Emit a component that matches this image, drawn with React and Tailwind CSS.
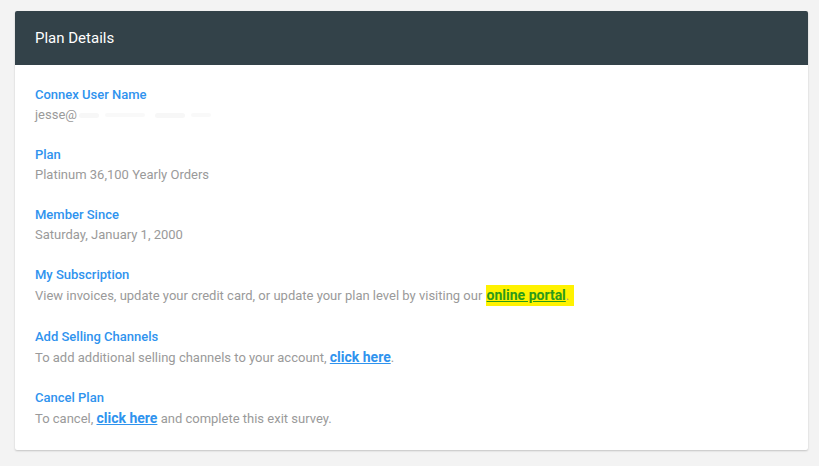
export default function App() {
  const font = { fontFamily: "Roboto, 'Noto Sans', sans-serif" };
  return (
    <div className="min-h-[466px] w-full bg-[#f3f3f3] pt-[11px] pl-[15px]" style={font}>
      <div className="w-[793px] h-[439px] bg-white rounded-[2px] shadow-[0_1px_2px_rgba(0,0,0,0.2)] overflow-hidden">
        <div className="h-[54px] bg-[#334249] flex items-center px-5">
          <h1 className="text-white text-[15px]">Plan Details</h1>
        </div>
        <div className="px-5 pt-[20px] flex flex-col gap-[20px] text-[13px] leading-[20px]">
          <div>
            <div className="text-[#2f93ee] font-medium">Connex User Name</div>
            <div className="text-[#9a9a9a] flex items-center">
              <span>jesse@</span>
              <span className="inline-block w-[20px] h-[5px] bg-[#f7f7f7] rounded-full ml-[2px]"></span>
              <span className="inline-block w-[40px] h-[4px] bg-[#f9f9f9] rounded-full ml-[6px]"></span>
              <span className="inline-block w-[30px] h-[5px] bg-[#f7f7f7] rounded-full ml-[10px]"></span>
              <span className="inline-block w-[20px] h-[4px] bg-[#f9f9f9] rounded-full ml-[6px]"></span>
            </div>
          </div>
          <div>
            <div className="text-[#2f93ee] font-medium">Plan</div>
            <div className="text-[#9a9a9a]">Platinum 36,100 Yearly Orders</div>
          </div>
          <div>
            <div className="text-[#2f93ee] font-medium">Member Since</div>
            <div className="text-[#9a9a9a]">Saturday, January 1, 2000</div>
          </div>
          <div className="pb-[1px]">
            <div className="text-[#2f93ee] font-medium">My Subscription</div>
            <div className="text-[#9a9a9a]">
              View invoices, update your credit card, or update your plan level by visiting our{" "}
              <span className="bg-[#fff200] pr-[5px] pl-[1px] py-[3px]">
                <a href="#" className="text-[#2c9a1a] font-bold underline text-[14px]">online portal</a>
                <span className="text-[#9a9a9a]">.</span>
              </span>
            </div>
          </div>
          <div>
            <div className="text-[#2f93ee] font-medium">Add Selling Channels</div>
            <div className="text-[#9a9a9a]">
              To add additional selling channels to your account,{" "}
              <a href="#" className="text-[#2f93ee] font-bold underline text-[14px]">click here</a>.
            </div>
          </div>
          <div>
            <div className="text-[#2f93ee] font-medium">Cancel Plan</div>
            <div className="text-[#9a9a9a]">
              To cancel,{" "}
              <a href="#" className="text-[#2f93ee] font-bold underline text-[14px]">click here</a>{" "}
              and complete this exit survey.
            </div>
          </div>
        </div>
      </div>
    </div>
  );
}
